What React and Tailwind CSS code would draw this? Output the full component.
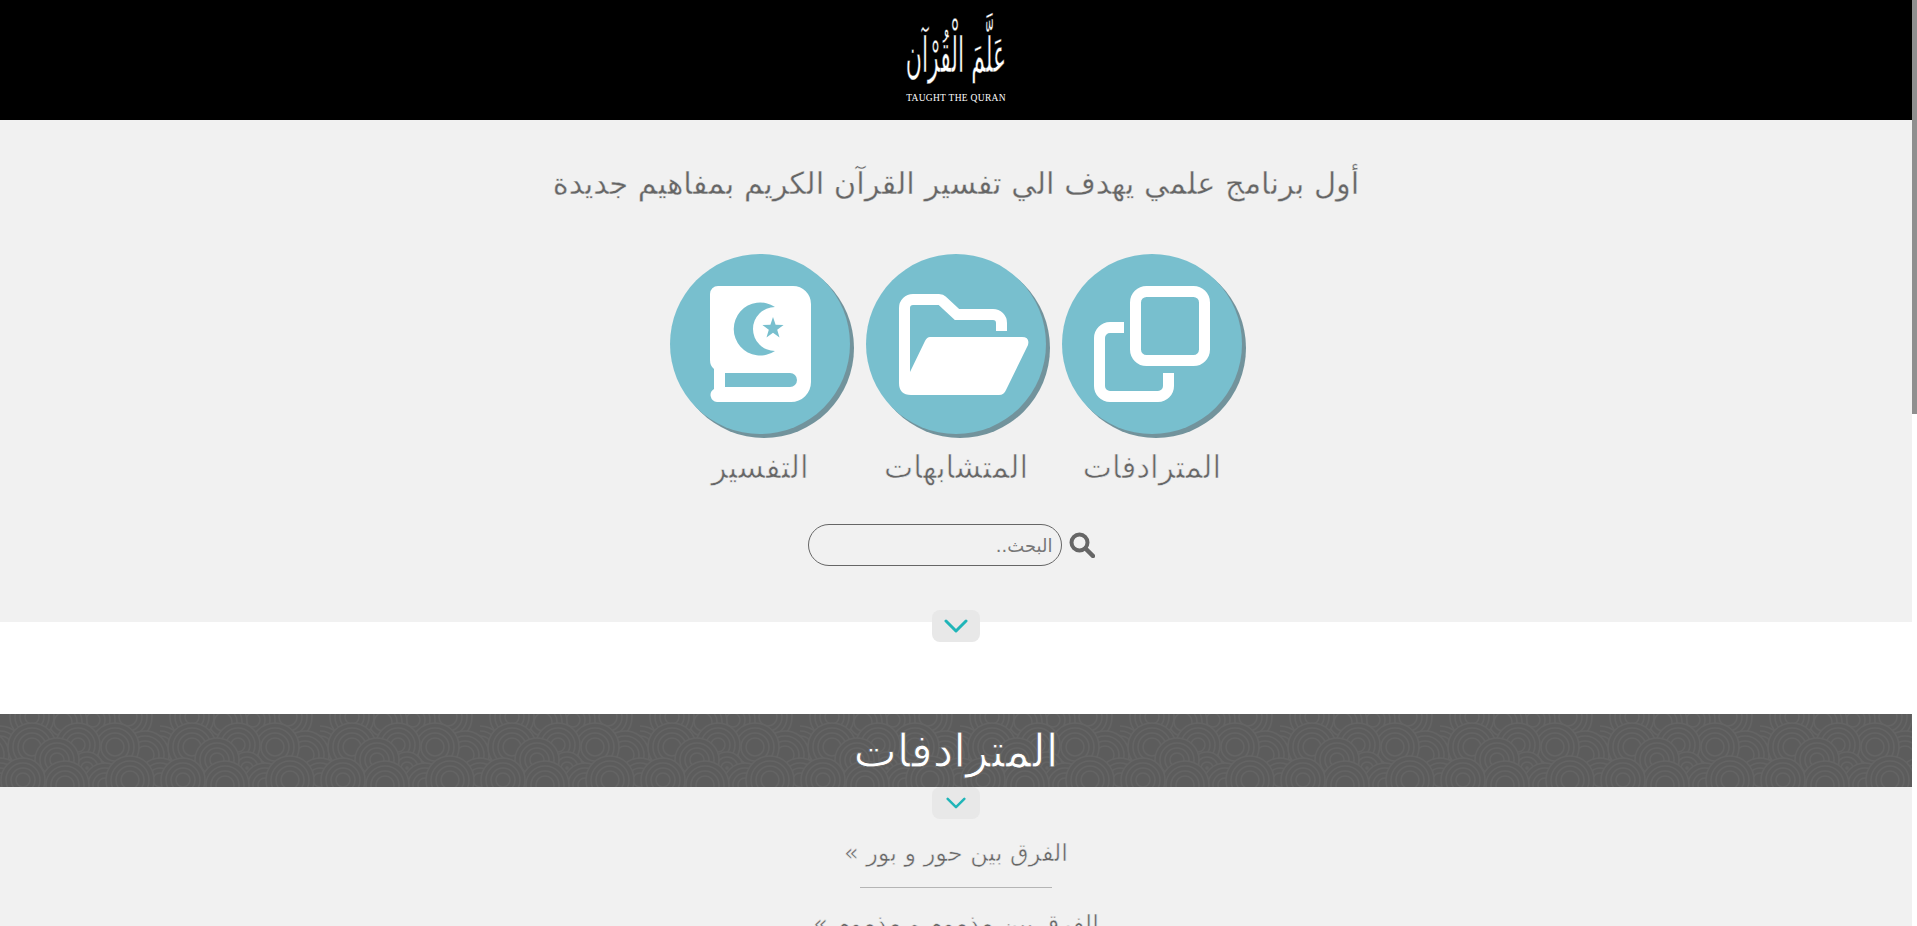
import React from "react";

const links = ["الفرق بين حور و بور »", "الفرق بين مذموم و مذموم »"];

// back to front, the later circles sit over the earlier ones
const swirls = [
  [128, 3, 24], [93, 6, 22], [63, 8, 24], [32, 3, 22], [0, 36, 24], [145, 41, 24], [115, 33, 24],
  [78, 31, 22], [32, 33, 24], [87, 54, 16], [57, 46, 22], [160, 66, 22], [105, 71, 22], [65, 71, 24], [23, 66, 22], [130, 66, 24],
];

function Chevron({ small }) {
  return (
    <svg width={small ? 20 : 24} height={small ? 12 : 14} viewBox="0 0 24 14" fill="none">
      <path d="M2 2l10 10L22 2" stroke="#20b5b8" strokeWidth="3" strokeLinecap="round" strokeLinejoin="round" />
    </svg>
  );
}

function CopyIcon() {
  return (
    <svg width="116" height="116" viewBox="0 0 116 116" fill="none" stroke="#fff" strokeWidth="11">
      <rect x="41.500" y="5.500" width="69" height="69" rx="11" />
      <path d="M30 41.500H16A10.500 10.500 0 0 0 5.500 52v48A10.500 10.500 0 0 0 16 110.500h48A10.500 10.500 0 0 0 74.500 100V87" />
    </svg>
  );
}

function FolderIcon() {
  return (
    <svg className="ml-4" width="130" height="101" viewBox="0 0 130 101" fill="none">
      <path
        d="M5.500 85V14A8.500 8.500 0 0 1 14 5.500H40q2 0 3.500 1.500L58 20.500H94a8.500 8.500 0 0 1 8.500 8.500V37"
        stroke="#fff"
        strokeWidth="11"
      />
      <path d="M31 43H123q8 0 6 8L107 96q-2 5-7 5H12q-12 0-12-12V85L11 78 26 47q2-4 5-4z" fill="#fff" />
    </svg>
  );
}

function BookIcon() {
  return (
    <svg width="101" height="116" viewBox="0 0 101 116">
      <path
        d="M8 0H83a18 18 0 0 1 18 18V96a20 20 0 0 1-20 20H7a7 7 0 0 1-3-13V83Q0 80 0 74V8A8 8 0 0 1 8 0z"
        fill="#fff"
      />
      <path d="M15 87H80a7 7 0 0 1 0 14H15z" fill="#78bfce" />
      <path d="M65 21A26.500 26.500 0 1 0 65 65A22 22 0 1 1 65 21z" fill="#78bfce" />
      <path d="M63 31l2.600 7.700 8 .2-6.400 4.800 2.300 7.700-6.500-4.600-6.500 4.600 2.300-7.700-6.400-4.800 8-.2z" fill="#78bfce" />
    </svg>
  );
}

function Feature({ label, children }) {
  return (
    <div className="flex w-[196px] flex-col items-center">
      <div className="flex h-[180px] w-[180px] items-center justify-center rounded-full bg-[#78bfce] shadow-[4px_4px_0_#72939c]">
        {children}
      </div>
      <div className="mt-[10px] text-[31px] leading-[46px] text-[#666] [-webkit-text-stroke:0.6px_#f1f1f1]">{label}</div>
    </div>
  );
}

function SwirlPattern() {
  return (
    <svg className="absolute inset-0 h-full w-full" aria-hidden="true">
      <defs>
        <pattern id="swirl" width="160" height="73" patternUnits="userSpaceOnUse">
          {swirls.map(([cx, cy, size]) =>
            [cx, cx - 160].map((x) => (
              <g key={`${x}-${cy}`} fill="#5c5c5c" stroke="#646464" strokeWidth="1.500">
                {[size, size - 5, size - 10, size - 15].map((r) => (
                  <circle key={r} cx={x} cy={cy} r={r} />
                ))}
              </g>
            ))
          )}
        </pattern>
      </defs>
      <rect width="100%" height="100%" fill="url(#swirl)" />
    </svg>
  );
}

export default function App() {
  return (
    <div className="flex h-[926px] overflow-hidden bg-white font-['DejaVu_Sans','Noto_Sans',sans-serif]">
      <div dir="rtl" className="min-w-0 flex-1">
        <header className="flex h-[120px] flex-col items-center bg-black text-white">
          <div className="mt-[23px] h-[65px] scale-y-[2.200] text-[22px] leading-[65px] whitespace-nowrap [-webkit-text-stroke:0.2px_#000]">
            عَلَّمَ الْقُرْآن
          </div>
          <div dir="ltr" className="mt-[4px] font-['Liberation_Serif',serif] text-[9.500px] leading-3 tracking-[0.3px]">
            TAUGHT THE QURAN
          </div>
        </header>

        <section className="relative flex h-[502px] flex-col items-center bg-[#f1f1f1] pt-[41px]">
          <h1 className="text-[30.500px] leading-[46px] font-normal text-[#666] [-webkit-text-stroke:0.3px_#f1f1f1]">
            أول برنامج علمي يهدف الي تفسير القرآن الكريم بمفاهيم جديدة
          </h1>

          <div className="mt-[47px] flex">
            <Feature label="المترادفات"><CopyIcon /></Feature>
            <Feature label="المتشابهات"><FolderIcon /></Feature>
            <Feature label="التفسير"><BookIcon /></Feature>
          </div>

          <div className="mt-[34px] mr-[10px] flex items-center gap-[7px]" dir="ltr">
            <div dir="rtl" className="flex h-[42px] w-[254px] items-center rounded-full border border-[#666] px-[8px] text-[18px] text-[#777]">
              البحث..
            </div>
            <svg width="26" height="26" viewBox="0 0 26 26" fill="none" stroke="#666">
              <circle cx="10.500" cy="10.500" r="8" strokeWidth="4" />
              <path d="M16.500 16.500L24 24" strokeWidth="4.500" strokeLinecap="round" />
            </svg>
          </div>

          <div className="absolute -bottom-[20px] left-1/2 flex h-[32px] w-[48px] -translate-x-1/2 items-center justify-center rounded-lg bg-[#e8e8e8]">
            <Chevron />
          </div>
        </section>

        <div className="h-[92px]" />

        <section className="relative flex h-[73px] items-center justify-center overflow-hidden bg-[#5c5c5c]">
          <SwirlPattern />
          <h2 className="relative text-[46px] leading-[72px] font-normal text-white [-webkit-text-stroke:0.8px_#5c5c5c]">المترادفات</h2>
        </section>

        <section className="relative flex flex-col items-center bg-[#f1f1f1] pt-[46px] pb-10">
          <div className="absolute top-0 left-1/2 flex h-[32px] w-[48px] -translate-x-1/2 items-center justify-center rounded-lg bg-[#e8e8e8]">
            <Chevron small />
          </div>
          {links.map((text) => (
            <div key={text} className="flex w-[192px] flex-col items-center">
              <div className="text-[24px] leading-[40px] whitespace-nowrap text-[#666] [-webkit-text-stroke:0.5px_#f1f1f1]">{text}</div>
              <div className="mt-[14px] mb-[16px] h-px w-full bg-[#b5b5b5]" />
            </div>
          ))}
        </section>
      </div>

      <div className="h-full w-[5px] shrink-0 bg-white">
        <div className="h-[414px] w-full bg-[#8f8f8f]" />
      </div>
    </div>
  );
}
